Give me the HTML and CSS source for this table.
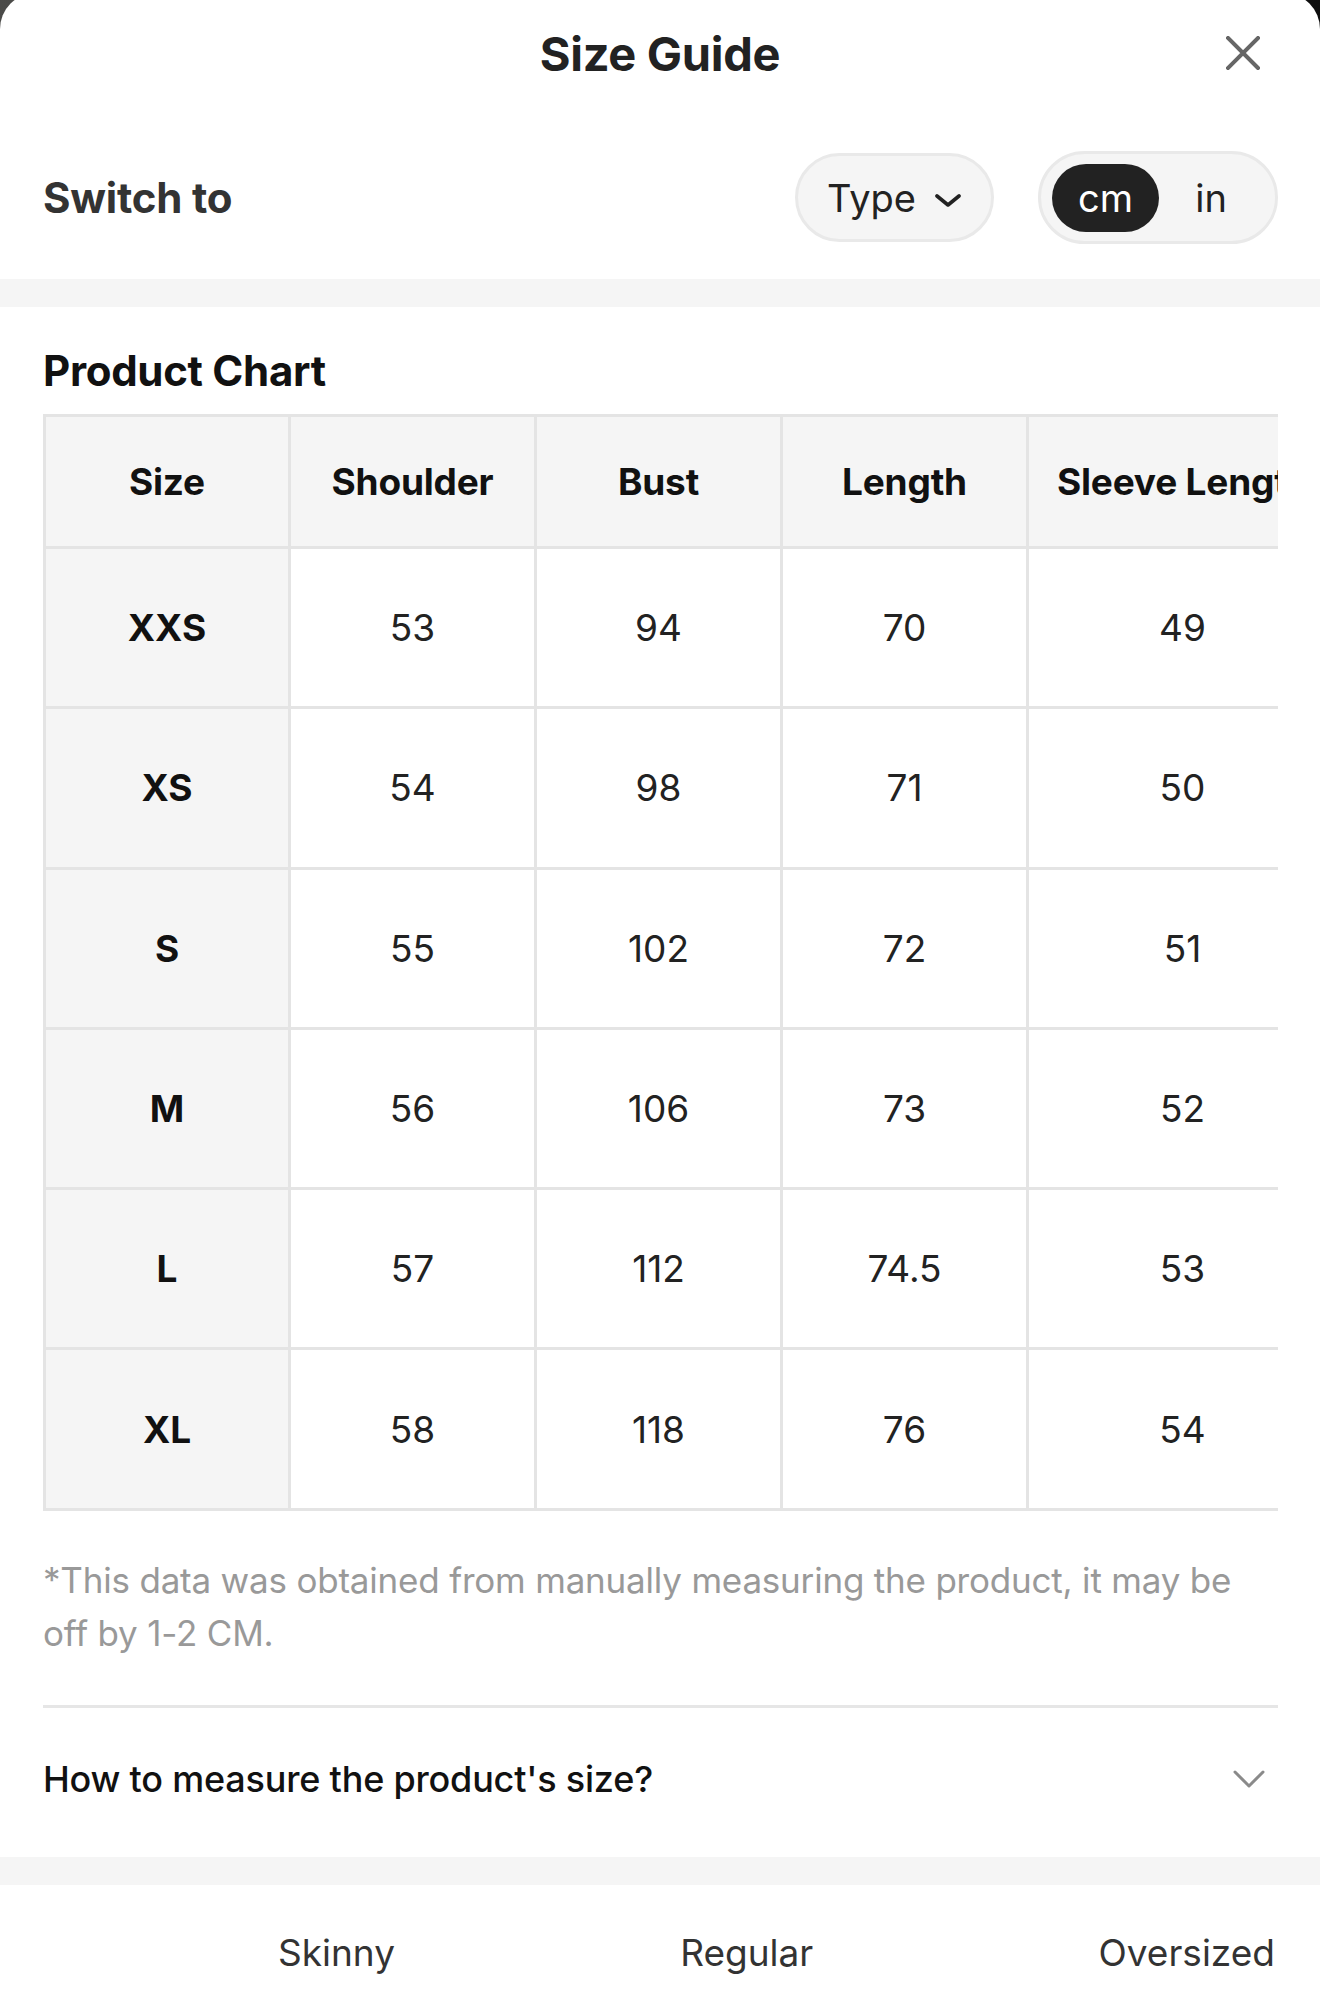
FILE: index.html
```html
<!DOCTYPE html>
<html lang="en">
<head>
<meta charset="utf-8">
<title>Size Guide</title>
<link rel="stylesheet" href="styles.css">
</head>
<body>
<div class="sheet">
  <header class="topbar">
    <span class="spacer"></span>
    <h1 class="title">Size Guide</h1>
    <button class="close" aria-label="Close">
      <svg viewBox="0 0 34 34" width="34" height="34"><path d="M2 2 L32 32 M32 2 L2 32" stroke="#666" stroke-width="4" fill="none" stroke-linecap="square"/></svg>
    </button>
  </header>

  <div class="switch-row">
    <span class="switch-label">Switch to</span>
    <div class="switch-controls">
      <button class="type-pill">Type
        <svg class="chev-sm" viewBox="0 0 28 14" width="28" height="14"><path d="M3 3 L14 12 L25 3" stroke="#222" stroke-width="3.6" fill="none" stroke-linecap="round" stroke-linejoin="round"/></svg>
      </button>
      <div class="unit-toggle">
        <span class="unit active">cm</span>
        <span class="unit">in</span>
      </div>
    </div>
  </div>

  <div class="band"></div>

  <section class="chart">
    <h2 class="chart-title">Product Chart</h2>
    <div class="table-scroll">
      <table class="size-table">
        <colgroup>
          <col class="c-size"><col class="c-std"><col class="c-std"><col class="c-std"><col class="c-wide">
        </colgroup>
        <thead>
          <tr><th>Size</th><th>Shoulder</th><th>Bust</th><th>Length</th><th>Sleeve Length</th></tr>
        </thead>
        <tbody>
          <tr><th>XXS</th><td>53</td><td>94</td><td>70</td><td>49</td></tr>
          <tr><th>XS</th><td>54</td><td>98</td><td>71</td><td>50</td></tr>
          <tr><th>S</th><td>55</td><td>102</td><td>72</td><td>51</td></tr>
          <tr><th>M</th><td>56</td><td>106</td><td>73</td><td>52</td></tr>
          <tr><th>L</th><td>57</td><td>112</td><td>74.5</td><td>53</td></tr>
          <tr><th>XL</th><td>58</td><td>118</td><td>76</td><td>54</td></tr>
        </tbody>
      </table>
    </div>
    <p class="note">*This data was obtained from manually measuring the product, it may be off by 1-2 CM.</p>
    <div class="divider"></div>
    <div class="measure-row">
      <span class="measure-text">How to measure the product's size?</span>
      <svg class="chev-lg" viewBox="0 0 32 18" width="32" height="18"><path d="M2 2 L16 16 L30 2" stroke="#8a8a8a" stroke-width="3" fill="none" stroke-linecap="round" stroke-linejoin="round"/></svg>
    </div>
  </section>

  <div class="band"></div>

  <section class="fit">
    <div class="fit-labels">
      <span>Skinny</span>
      <span>Regular</span>
      <span>Oversized</span>
    </div>
    <div class="fit-type">Fit Type</div>
  </section>
</div>
</body>
</html>
```

FILE: styles.css
```css
* { box-sizing: border-box; }

html, body {
  margin: 0;
  padding: 0;
}

body {
  background: linear-gradient(90deg, #4b4b49 0%, #2a2a29 50%, #0e0e0e 100%);
  font-family: "Inter", "Noto Sans", "Liberation Sans", sans-serif;
  color: #222;
  height: 1998px;
  overflow: hidden;
}

.sheet {
  background: #fff;
  margin-top: -7px;
  border-radius: 36px 36px 0 0;
  min-height: 2100px;
  padding-top: 7px;
}

/* Header */
.topbar {
  display: grid;
  grid-template-columns: 1fr auto 1fr;
  align-items: center;
  height: 106px;
}

.title {
  margin: 0;
  font-size: 47px;
  font-weight: 700;
  color: #222;
  letter-spacing: -0.3px;
  line-height: 1;
}

.close {
  justify-self: end;
  margin-right: 60px;
  border: 0;
  background: none;
  padding: 0;
  width: 34px;
  height: 34px;
  display: flex;
}

/* Switch row */
.switch-row {
  display: flex;
  justify-content: space-between;
  align-items: center;
  padding: 45px 42px 35px 43px;
}

.switch-label {
  font-size: 42px;
  font-weight: 700;
  color: #333;
  letter-spacing: -0.2px;
}

.switch-controls {
  display: flex;
  align-items: center;
  gap: 44px;
}

.type-pill {
  display: flex;
  align-items: center;
  gap: 18px;
  height: 89px;
  width: 199px;
  padding: 0 0 0 29px;
  border: 3px solid #e9e9e9;
  background: #f5f5f5;
  border-radius: 45px;
  font-family: inherit;
  font-size: 38px;
  color: #222;
}

.chev-sm { margin-top: 4px; }

.unit-toggle {
  display: flex;
  align-items: center;
  height: 93px;
  width: 240px;
  padding: 0 11px;
  border: 3px solid #e9e9e9;
  background: #f5f5f5;
  border-radius: 47px;
}

.unit {
  display: flex;
  align-items: center;
  justify-content: center;
  width: 107px;
  height: 68px;
  border-radius: 34px;
  font-size: 38px;
  color: #222;
}

.unit.active {
  background: #222;
  color: #fff;
}

.unit:last-child { width: 104px; }

.band {
  height: 28px;
  background: #f5f5f5;
}

/* Chart */
.chart {
  padding: 39px 42px 0 43px;
}

.chart-title {
  margin: 0;
  font-size: 42px;
  line-height: 50px;
  font-weight: 700;
  color: #111;
  letter-spacing: -0.3px;
}

.table-scroll {
  margin-top: 18px;
  overflow-x: auto;
  scrollbar-width: none;
}

.table-scroll::-webkit-scrollbar { display: none; }

.size-table {
  border-collapse: collapse;
  table-layout: fixed;
  width: 1294px;
  border: 3px solid #e4e4e4;
}

.c-size { width: 245px; }
.c-std { width: 246px; }
.c-wide { width: 310px; }

.size-table th,
.size-table td {
  border: 3px solid #e4e4e4;
  text-align: center;
  vertical-align: middle;
  padding: 0;
  white-space: nowrap;
  overflow: hidden;
}

.size-table thead tr { height: 132px; }
.size-table tbody tr { height: 160.3px; }

.size-table thead th {
  background: #f5f5f5;
  font-size: 37px;
  font-weight: 700;
  color: #111;
  letter-spacing: -0.2px;
}

.size-table thead th:last-child {
  text-align: left;
  padding-left: 28px;
}

.size-table tbody th {
  background: #f5f5f5;
  font-size: 37px;
  font-weight: 700;
  color: #111;
}

.size-table td {
  font-size: 37px;
  font-weight: 400;
  color: #222;
}

.note {
  margin: 43px 0 0;
  font-size: 35px;
  line-height: 53px;
  color: #999;
  letter-spacing: -0.2px;
}

.divider {
  margin-top: 45px;
  height: 3px;
  background: #e6e6e6;
}

.measure-row {
  display: flex;
  justify-content: space-between;
  align-items: center;
  height: 149px;
  padding-bottom: 6px;
}

.measure-text {
  font-size: 36px;
  font-weight: 500;
  color: #111;
  letter-spacing: -0.2px;
}

.chev-lg { margin-right: 13px; }

/* Fit */
.fit {
  padding: 45px 45px 0 43px;
}

.fit-labels {
  display: flex;
  justify-content: space-between;
  padding-left: 235px;
  font-size: 37px;
  line-height: 46px;
  color: #333;
}

.fit-type {
  margin-top: 14px;
  font-size: 40px;
  font-weight: 700;
  color: #222;
}
```
